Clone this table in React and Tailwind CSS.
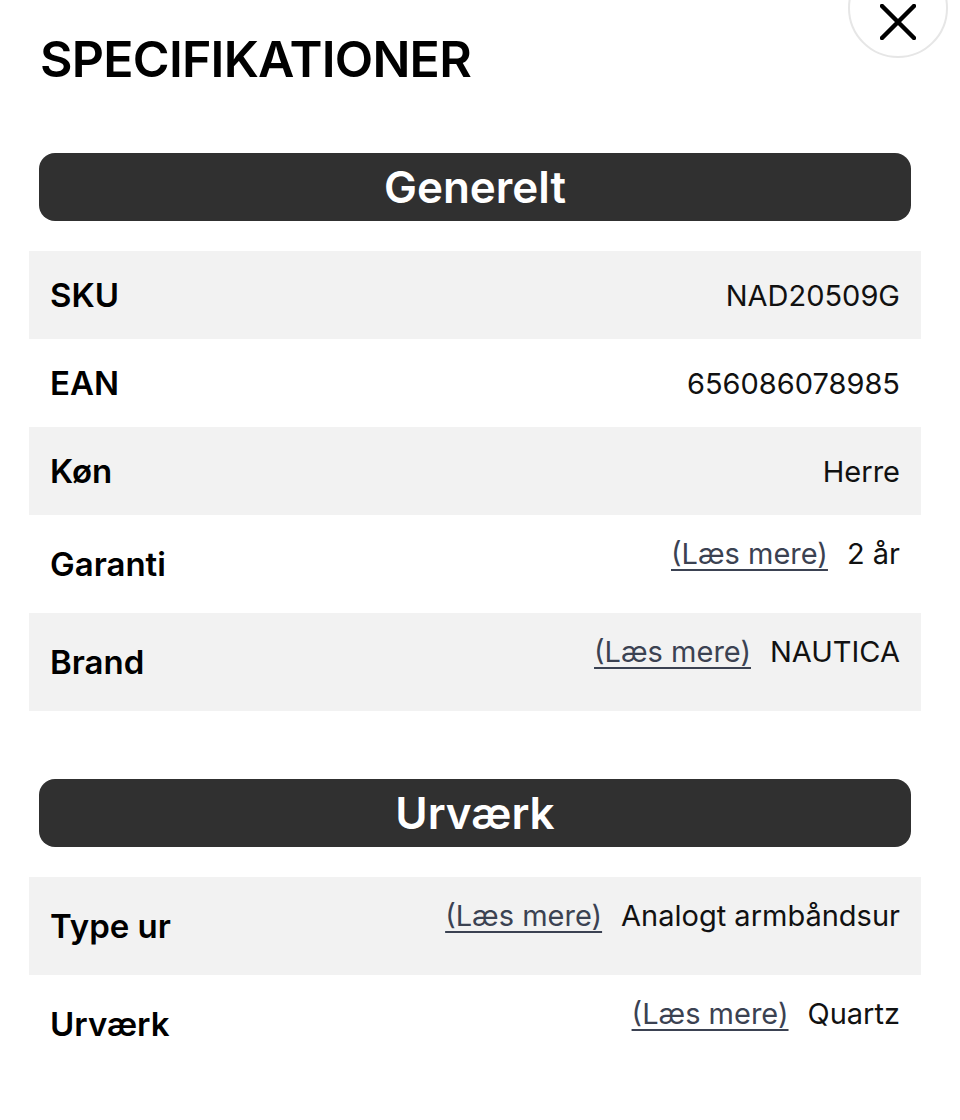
import clsx from "clsx";

const sections = [
  {
    title: "Generelt",
    rows: [
      { label: "SKU", value: "NAD20509G" },
      { label: "EAN", value: "656086078985" },
      { label: "Køn", value: "Herre" },
      { label: "Garanti", value: "2 år", link: true },
      { label: "Brand", value: "NAUTICA", link: true },
    ],
  },
  {
    title: "Urværk",
    rows: [
      { label: "Type ur", value: "Analogt armbåndsur", link: true },
      { label: "Urværk", value: "Quartz", link: true },
    ],
  },
];

function CloseButton() {
  return (
    <button className="absolute left-[848px] top-[-42px] flex h-[100px] w-[100px] items-center justify-center rounded-full border-2 border-[#e6e6e6] bg-white">
      <svg width="36" height="36" viewBox="0 0 36 36" fill="none" className="mt-[28px]" aria-hidden="true">
        <path d="M2 2l32 32M34 2L2 34" stroke="#000" strokeWidth="4.5" strokeLinecap="round" />
      </svg>
    </button>
  );
}

function Row({ label, value, link, shaded }) {
  return (
    <div
      className={clsx(
        "flex items-center justify-between pl-[21px] pr-[21px]",
        shaded ? "bg-[#f2f2f2]" : "bg-white",
        link ? "h-[98px]" : "h-[88px]",
      )}
    >
      <span className="text-[33px] font-semibold leading-none text-black">{label}</span>
      <span className={clsx("flex items-center gap-[19px] text-[29px] leading-none text-[#111]", link && "mb-[22px]")}>
        {link && <a className="text-[#3b4252] underline underline-offset-[5px] decoration-[2px]">(Læs mere)</a>}
        <span>{value}</span>
      </span>
    </div>
  );
}

export default function App() {
  return (
    <div className="relative h-[1120px] w-[960px] overflow-hidden bg-white font-['Inter',sans-serif]">
      <CloseButton />
      <div className="pl-[29px] pr-[39px] pt-[31px]">
        <h2 className="ml-[11px] text-[50px] font-semibold leading-[56px] tracking-[-0.015em] text-black">SPECIFIKATIONER</h2>
        <div className="mt-[66px] flex flex-col gap-[68px]">
          {sections.map((s) => (
            <div key={s.title}>
              <div className="mx-[10px] flex h-[68px] items-center justify-center rounded-[16px] bg-[#303030]">
                <span className="text-[44px] font-semibold leading-none text-white">{s.title}</span>
              </div>
              <div className="mt-[30px] flex flex-col">
                {s.rows.map((r, i) => (
                  <Row key={r.label} {...r} shaded={i % 2 === 0} />
                ))}
              </div>
            </div>
          ))}
        </div>
      </div>
    </div>
  );
}
